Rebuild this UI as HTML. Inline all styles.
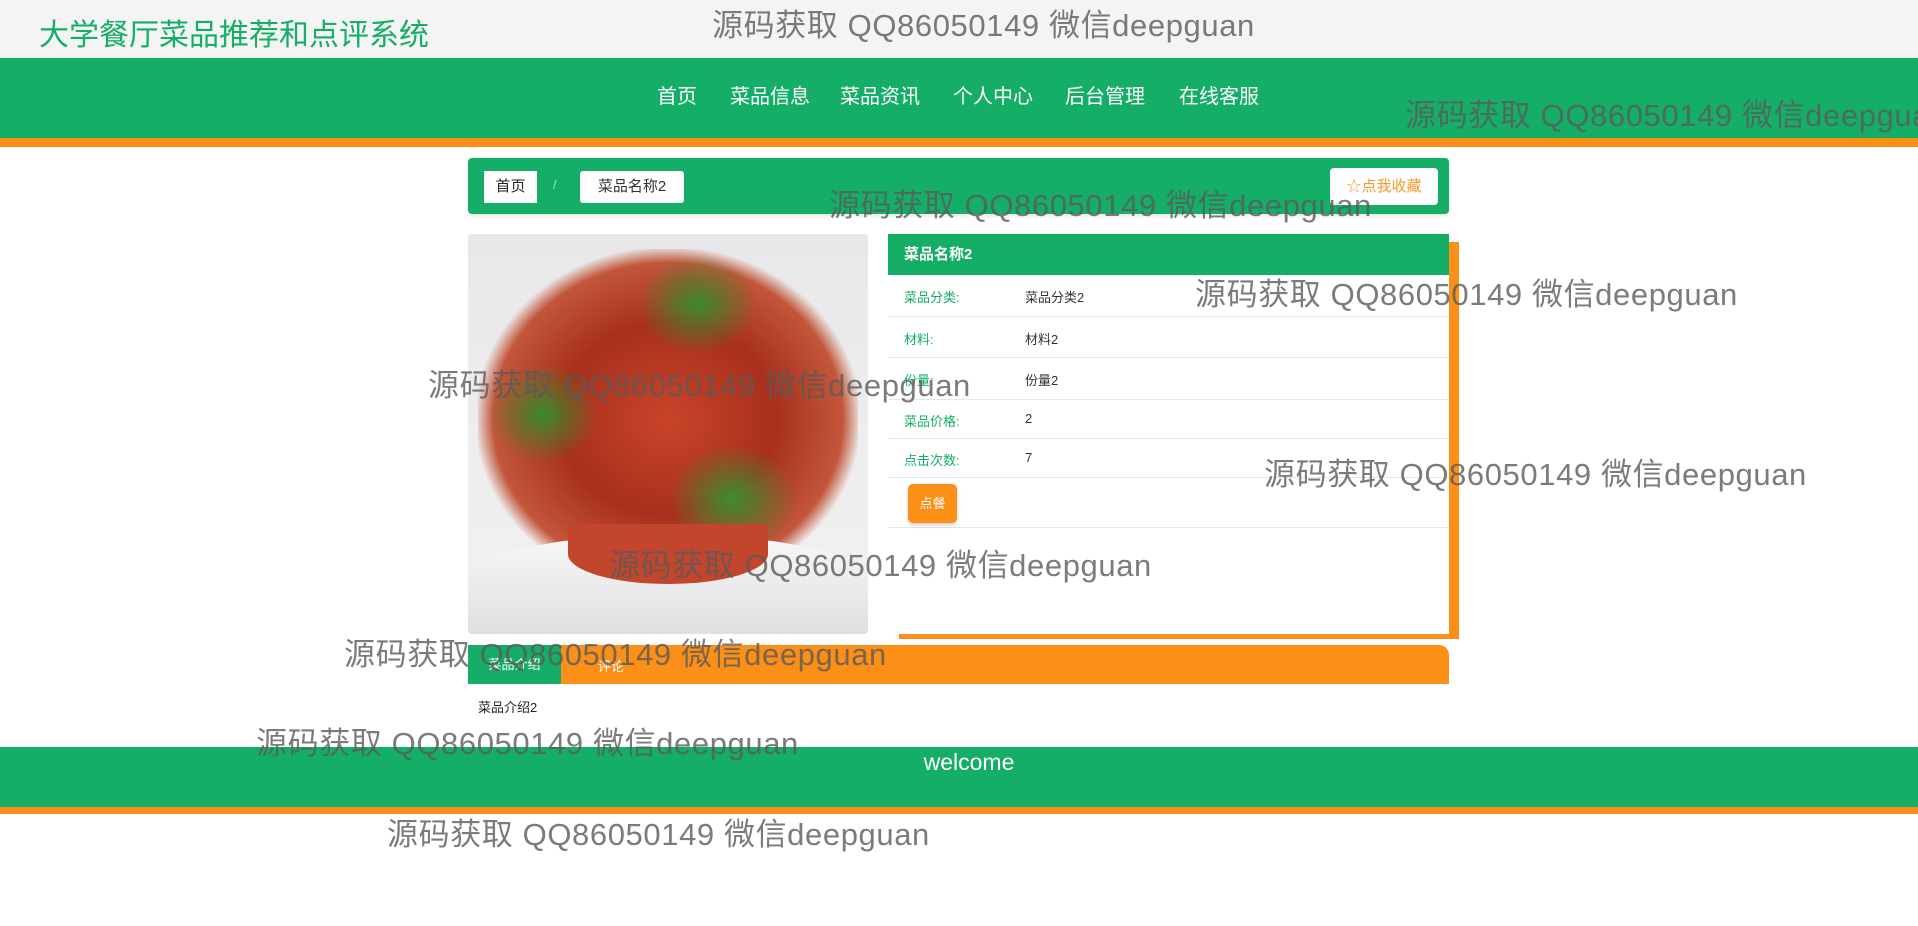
<!DOCTYPE html>
<html><head><meta charset="utf-8"><style>
*{margin:0;padding:0;box-sizing:border-box}
body{width:1918px;height:926px;overflow:hidden;background:#fff;font-family:"Liberation Sans","Noto Sans CJK SC",sans-serif;position:relative}
.abs{position:absolute}
.g{background:#15ae67}
.o{background:#fb8f17}
.wm{position:absolute;font-size:31px;color:rgba(90,90,90,.8);white-space:nowrap;font-family:"Liberation Sans","Noto Sans CJK SC",sans-serif;letter-spacing:0.6px}
.nav{position:absolute;top:80px;color:#fff;font-size:20px}
.row{position:absolute;left:888px;width:561px;border-bottom:1px solid #e6e6e6;font-size:13px}
.row .l{position:absolute;left:16px;color:#15ae67}
.row .v{position:absolute;left:137px;color:#333}
</style></head><body>
<div class="abs" style="left:0;top:0;width:1918px;height:58px;background:#f4f4f4"></div>
<div class="abs" style="left:39px;top:10px;font-size:30px;color:#15ae67">大学餐厅菜品推荐和点评系统</div>
<div class="abs g" style="left:0;top:58px;width:1918px;height:80px"></div>
<div class="abs o" style="left:0;top:138px;width:1918px;height:9px"></div>
<div class="nav" style="left:657px">首页</div>
<div class="nav" style="left:730px">菜品信息</div>
<div class="nav" style="left:840px">菜品资讯</div>
<div class="nav" style="left:953px">个人中心</div>
<div class="nav" style="left:1065px">后台管理</div>
<div class="nav" style="left:1179px">在线客服</div>

<div class="abs g" style="left:468px;top:158px;width:981px;height:56px;border-radius:4px;box-shadow:0 2px 4px rgba(0,0,0,.1)"></div>
<div class="abs" style="left:484px;top:171px;width:53px;height:32px;background:#fff;font-size:15px;line-height:32px;text-align:center;color:#222">首页</div>
<div class="abs" style="left:553px;top:177px;color:#9dd;font-size:13px">/</div>
<div class="abs" style="left:580px;top:171px;width:104px;height:32px;background:#fff;border-radius:3px;font-size:15px;line-height:32px;text-align:center;color:#333">菜品名称2</div>
<div class="abs" style="left:1330px;top:168px;width:108px;height:37px;background:#fff;border-radius:4px;font-size:15px;line-height:37px;text-align:center;color:#f39a2c">☆点我收藏</div>

<div class="abs" style="left:468px;top:234px;width:400px;height:400px;border-radius:4px;overflow:hidden;background:linear-gradient(#e8e8ea,#f2f2f2)">
<div class="abs" style="left:10px;top:15px;width:380px;height:340px;border-radius:45% 45% 30% 30%;background:radial-gradient(ellipse at 50% 50%,#c8442a 0%,#a8301c 40%,#c2563a 65%,rgba(200,80,50,0) 72%)"></div>
<div class="abs" style="left:170px;top:20px;width:120px;height:100px;border-radius:50%;background:radial-gradient(#3a8a2c,rgba(58,138,44,0) 70%)"></div>
<div class="abs" style="left:20px;top:130px;width:110px;height:100px;border-radius:50%;background:radial-gradient(#3a8a2c,rgba(58,138,44,0) 70%)"></div>
<div class="abs" style="left:200px;top:210px;width:130px;height:110px;border-radius:50%;background:radial-gradient(#3d8d30,rgba(61,141,48,0) 70%)"></div>
<div class="abs" style="left:-30px;top:300px;width:460px;height:130px;border-radius:50% 50% 0 0;background:linear-gradient(#f8f8f8,#d8d8d8)"></div>
<div class="abs" style="left:100px;top:290px;width:200px;height:60px;border-radius:0 0 50% 50%;background:#c2452c"></div>
</div>

<div class="abs o" style="left:899px;top:242px;width:560px;height:397px"></div>
<div class="abs" style="left:888px;top:234px;width:561px;height:400px;background:#fff"></div>
<div class="abs g" style="left:888px;top:234px;width:561px;height:41px;color:#fff;font-size:15px;font-weight:bold;line-height:41px;padding-left:16px">菜品名称2</div>
<div class="row" style="top:275px;height:42px"><span class="l" style="top:12px">菜品分类:</span><span class="v" style="top:12px">菜品分类2</span></div>
<div class="row" style="top:317px;height:41px"><span class="l" style="top:12px">材料:</span><span class="v" style="top:12px">材料2</span></div>
<div class="row" style="top:358px;height:42px"><span class="l" style="top:12px">份量:</span><span class="v" style="top:12px">份量2</span></div>
<div class="row" style="top:400px;height:39px"><span class="l" style="top:11px">菜品价格:</span><span class="v" style="top:11px">2</span></div>
<div class="row" style="top:439px;height:39px"><span class="l" style="top:11px">点击次数:</span><span class="v" style="top:11px">7</span></div>
<div class="row" style="top:478px;height:50px"></div>
<div class="abs o" style="left:908px;top:484px;width:49px;height:39px;border-radius:5px;color:#fff;font-size:13px;line-height:39px;text-align:center;box-shadow:0 2px 4px rgba(0,0,0,.2)">点餐</div>

<div class="abs o" style="left:468px;top:645px;width:981px;height:39px;border-radius:0 10px 0 0"></div>
<div class="abs g" style="left:468px;top:645px;width:93px;height:39px;color:#fff;font-size:13px;line-height:39px;text-align:center">菜品介绍</div>
<div class="abs" style="left:598px;top:656px;color:#fff;font-size:13px">评论</div>
<div class="abs" style="left:478px;top:697px;font-size:13px;color:#222">菜品介绍2</div>

<div class="abs g" style="left:0;top:747px;width:1918px;height:60px"></div>
<div class="abs o" style="left:0;top:807px;width:1918px;height:7px"></div>
<div class="abs" style="left:0;top:749px;width:1938px;text-align:center;color:#fff;font-size:23px">welcome</div>

<div class="wm" style="left:712px;top:0px">源码获取 QQ86050149 微信deepguan</div>
<div class="wm" style="left:1405px;top:90px">源码获取 QQ86050149 微信deepguan</div>
<div class="wm" style="left:829px;top:180px">源码获取 QQ86050149 微信deepguan</div>
<div class="wm" style="left:1195px;top:269px">源码获取 QQ86050149 微信deepguan</div>
<div class="wm" style="left:428px;top:360px">源码获取 QQ86050149 微信deepguan</div>
<div class="wm" style="left:1264px;top:449px">源码获取 QQ86050149 微信deepguan</div>
<div class="wm" style="left:609px;top:540px">源码获取 QQ86050149 微信deepguan</div>
<div class="wm" style="left:344px;top:629px">源码获取 QQ86050149 微信deepguan</div>
<div class="wm" style="left:256px;top:718px">源码获取 QQ86050149 微信deepguan</div>
<div class="wm" style="left:387px;top:809px">源码获取 QQ86050149 微信deepguan</div>
</body></html>
